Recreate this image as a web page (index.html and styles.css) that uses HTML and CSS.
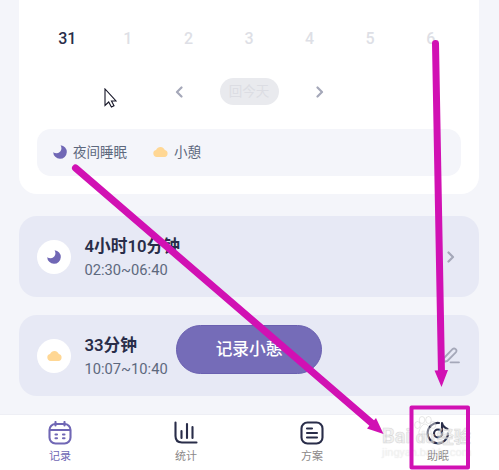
FILE: index.html
```html
<!DOCTYPE html>
<html lang="zh-CN">
<head>
<meta charset="utf-8">
<title>睡眠记录</title>
<link rel="stylesheet" href="styles.css">
</head>
<body>
<svg class="defs" width="0" height="0">
  <symbol id="moon" viewBox="0 0 14 14"><path d="M7.600 .200A6.800 6.800 0 1 1 .200 7.200C2.100 8.600 4.900 8.700 6.700 7.100C8.700 5.400 8.900 2.500 7.600 .200Z" fill="#7067b5"/></symbol>
  <symbol id="cloud" viewBox="0 0 15 10"><path d="M3.700 10A3.500 3.500 0 0 1 3 3.100C4 1.200 5.500 0 7.500 0C9.800 0 11.200 1.500 11.800 3.100A3.500 3.500 0 0 1 11.500 10Z" fill="#ffd794"/></symbol>
  <symbol id="right" viewBox="0 0 8 12"><path d="M1.500 1.500L6 6L1.500 10.500" fill="none" stroke="#a5a8b9" stroke-width="2.200" stroke-linecap="round" stroke-linejoin="round"/></symbol>
</svg>
<main class="screen">
  <section class="calendar">
    <div class="dates"><span class="current">31</span><span>1</span><span>2</span><span>3</span><span>4</span><span>5</span><span>6</span></div>
    <div class="pager">
      <svg class="chevron flip"><use href="#right"/></svg>
      <span class="today">回今天</span>
      <svg class="chevron"><use href="#right"/></svg>
    </div>
    <div class="legend">
      <svg class="moon"><use href="#moon"/></svg><span class="night">夜间睡眠</span>
      <svg class="cloud"><use href="#cloud"/></svg><span>小憩</span>
    </div>
  </section>
  <section class="record">
    <div class="badge"><svg class="moon"><use href="#moon"/></svg></div>
    <div class="info"><strong>4小时10分钟</strong><span>02:30~06:40</span></div>
    <svg class="chevron"><use href="#right"/></svg>
  </section>
  <section class="record">
    <div class="badge"><svg class="cloud"><use href="#cloud"/></svg></div>
    <div class="info"><strong>33分钟</strong><span>10:07~10:40</span></div>
    <svg class="edit" viewBox="0 0 20 17" fill="none" stroke="#a5a8b9" stroke-width="1.800" stroke-linecap="round" stroke-linejoin="round"><path d="M2 15L3 11L11.500 2.200C13.600 .200 16.700 3.200 14.800 5.300L6.300 14L2 15M9.500 15.300H18"/></svg>
  </section>
</main>
<button class="nap">记录小憩</button>
<nav class="tabs">
  <div class="tab active">
    <svg viewBox="0 0 24 24"><rect x="1.500" y="3" width="21" height="19.500" rx="6"/><path d="M2 9H22M7.500 1V4.500M16.500 1V4.500M7.500 13.500H9M15 13.500H16.500M7.500 17.300H9M15 17.300H16.500"/></svg>
    <span>记录</span>
  </div>
  <div class="tab">
    <svg viewBox="0 0 24 24"><path d="M1.500 1.500V15Q1.500 21.500 8 21.500H22.500M7.500 10V17M13 3V17M18.500 6V17"/></svg>
    <span>统计</span>
  </div>
  <div class="tab">
    <svg viewBox="0 0 24 24"><rect x="1.500" y="1.500" width="21" height="21" rx="6"/><path d="M7 7.500H12M7 12H17M7 16.500H17"/></svg>
    <span>方案</span>
  </div>
  <div class="tab">
    <svg viewBox="0 0 24 24"><path d="M13 2A10.200 10.200 0 1 0 22 12.500"/><circle cx="12" cy="12.500" r="4"/><path d="M16 12.500V2Q17 6 21.500 8"/></svg>
    <span>助眠</span>
  </div>
</nav>
<div class="watermark">
  <svg class="paw" viewBox="0 0 22 20"><ellipse cx="3.500" cy="9" rx="2.800" ry="3.500"/><ellipse cx="8" cy="4" rx="2.800" ry="3.500"/><ellipse cx="14.500" cy="4" rx="2.800" ry="3.500"/><ellipse cx="19" cy="9" rx="2.800" ry="3.500"/><path d="M11 8C14 8 18 15 17 18H5C4 15 8 8 11 8Z"/></svg>
  <div class="brand"><b>Bai</b><b class="du">du</b><b class="cn">经验</b></div>
  <div class="site">jingyan.baidu.com</div>
</div>
<svg class="marks" viewBox="0 0 499 470">
  <path class="stroke" d="M75.500 168L374 425M435.500 43.500L441.500 374"/>
  <path class="head" d="M367 428.500L383.500 434L376 418ZM434.500 370.500L448 370L441.500 387Z"/>
  <rect class="frame" x="411.500" y="407.500" width="56.500" height="60"/>
</svg>
<svg class="cursor" viewBox="0 0 13 20"><path d="M1 1V17.500L4.700 14L7.400 19L10 17.700L7.500 13H12Z" fill="#fff" stroke="#141426" stroke-width="1.100"/></svg>
</body>
</html>
```
FILE: styles.css
```css
* { box-sizing: border-box; }
body {
  margin: 0;
  width: 499px;
  height: 470px;
  position: relative;
  overflow: hidden;
  display: flex;
  flex-direction: column;
  background: #f4f5fa;
  color: #5d687d;
  font-family: Roboto, "Noto Sans CJK SC", sans-serif;
}
svg { display: block; flex: none; }
.defs { position: absolute; }
.screen {
  height: 414px;
  padding: 0 20px 0 19px;
}
.calendar {
  height: 193.500px;
  padding: 26px 18px 0;
  background: #fff;
  border-radius: 0 0 18px 18px;
}
.dates {
  display: grid;
  grid-template-columns: repeat(7, 1fr);
  height: 24px;
  line-height: 25px;
  text-align: center;
  font-size: 16px;
  font-weight: 500;
  color: #dedfe6;
}
.current { color: #292d49; }
.pager {
  display: flex;
  align-items: center;
  justify-content: center;
  gap: 37px;
  height: 27px;
  margin-top: 28px;
}
.today {
  width: 59px;
  height: 27px;
  line-height: 26px;
  border-radius: 14px;
  text-align: center;
  background: #e9eaee;
  color: #dcdde3;
  font-size: 13.500px;
}
.chevron { width: 8px; height: 12px; }
.flip { transform: scaleX(-1); }
.legend {
  display: flex;
  align-items: center;
  height: 47px;
  margin-top: 24px;
  padding-left: 15.500px;
  background: #f4f5fa;
  border-radius: 14px;
  font-size: 13.500px;
}
.legend span { line-height: 20px; margin: 0 0 2px 6.500px; }
.legend .night { margin-right: 25.500px; }
.legend svg { margin-bottom: 1px; }
.moon { width: 14px; height: 14px; }
.cloud { width: 15px; height: 10px; }
.record {
  display: flex;
  align-items: center;
  height: 81px;
  margin-top: 22.500px;
  padding: 0 24px 0 18px;
  background: #e7e9f5;
  border-radius: 18px;
}
.record + .record { margin-top: 18px; padding-right: 18px; }
.badge {
  display: flex;
  align-items: center;
  justify-content: center;
  width: 34px;
  height: 34px;
  border-radius: 50%;
  background: #fff;
}
.info {
  display: flex;
  flex-direction: column;
  flex: 1;
  padding: 2px 0 0 13.500px;
}
.info strong {
  line-height: 25px;
  font-size: 16.700px;
  font-weight: 600;
  color: #292d49;
}
.info span { line-height: 22px; font-size: 14.700px; }
.edit { width: 20px; height: 17px; }
.nap {
  position: absolute;
  left: 176px;
  top: 325px;
  width: 146px;
  height: 49px;
  padding: 0;
  border: 1px solid #6a60b0;
  border-radius: 25px;
  background: #756cb8;
  color: #fff;
  font: 500 16.700px/47px Roboto, "Noto Sans CJK SC", sans-serif;
}
.tabs {
  display: grid;
  grid-template-columns: repeat(4, 126px);
  flex: none;
  height: 56px;
  margin-left: -3px;
  border-top: 1px solid #eeeff5;
  background: #fff;
}
.tab {
  display: flex;
  flex-direction: column;
  align-items: center;
  padding-top: 6px;
  color: #8b8888;
  font-size: 11px;
}
.tab svg {
  width: 24px;
  height: 24px;
  fill: none;
  stroke: #292d49;
  stroke-width: 2.100;
  stroke-linecap: round;
  stroke-linejoin: round;
}
.tab span { line-height: 16px; margin-top: 4px; }
.tab.active { color: #7067b5; }
.tab.active svg { stroke: #7067b5; }
.watermark {
  position: absolute;
  left: 382px;
  top: 416px;
  width: 92px;
  height: 44px;
  color: rgba(255, 255, 255, .5);
  text-shadow: 0 0 1px rgba(150, 150, 150, .3);
}
.paw {
  position: absolute;
  left: 32px;
  top: 0;
  width: 22px;
  height: 20px;
  fill: rgba(255, 255, 255, .4);
  stroke: rgba(170, 170, 170, .4);
  stroke-width: .700;
}
.brand {
  display: flex;
  align-items: baseline;
  padding-top: 9px;
  font-size: 20px;
  line-height: 22px;
  -webkit-text-stroke: .500px rgba(175, 175, 175, .4);
}
.brand .du { font-size: 17px; margin-left: 5px; }
.brand .cn { font-size: 17px; margin-left: 2px; }
.site { font-size: 11px; line-height: 10px; white-space: nowrap; }
.marks {
  position: absolute;
  left: 0;
  top: 0;
  width: 499px;
  height: 470px;
}
.stroke { fill: none; stroke: #d111b3; stroke-width: 7; stroke-linecap: round; }
.head { fill: #d111b3; }
.frame { fill: none; stroke: #d111b3; stroke-width: 4; stroke-linejoin: round; }
.cursor {
  position: absolute;
  left: 103.500px;
  top: 87.500px;
  width: 13px;
  height: 20px;
}
```
